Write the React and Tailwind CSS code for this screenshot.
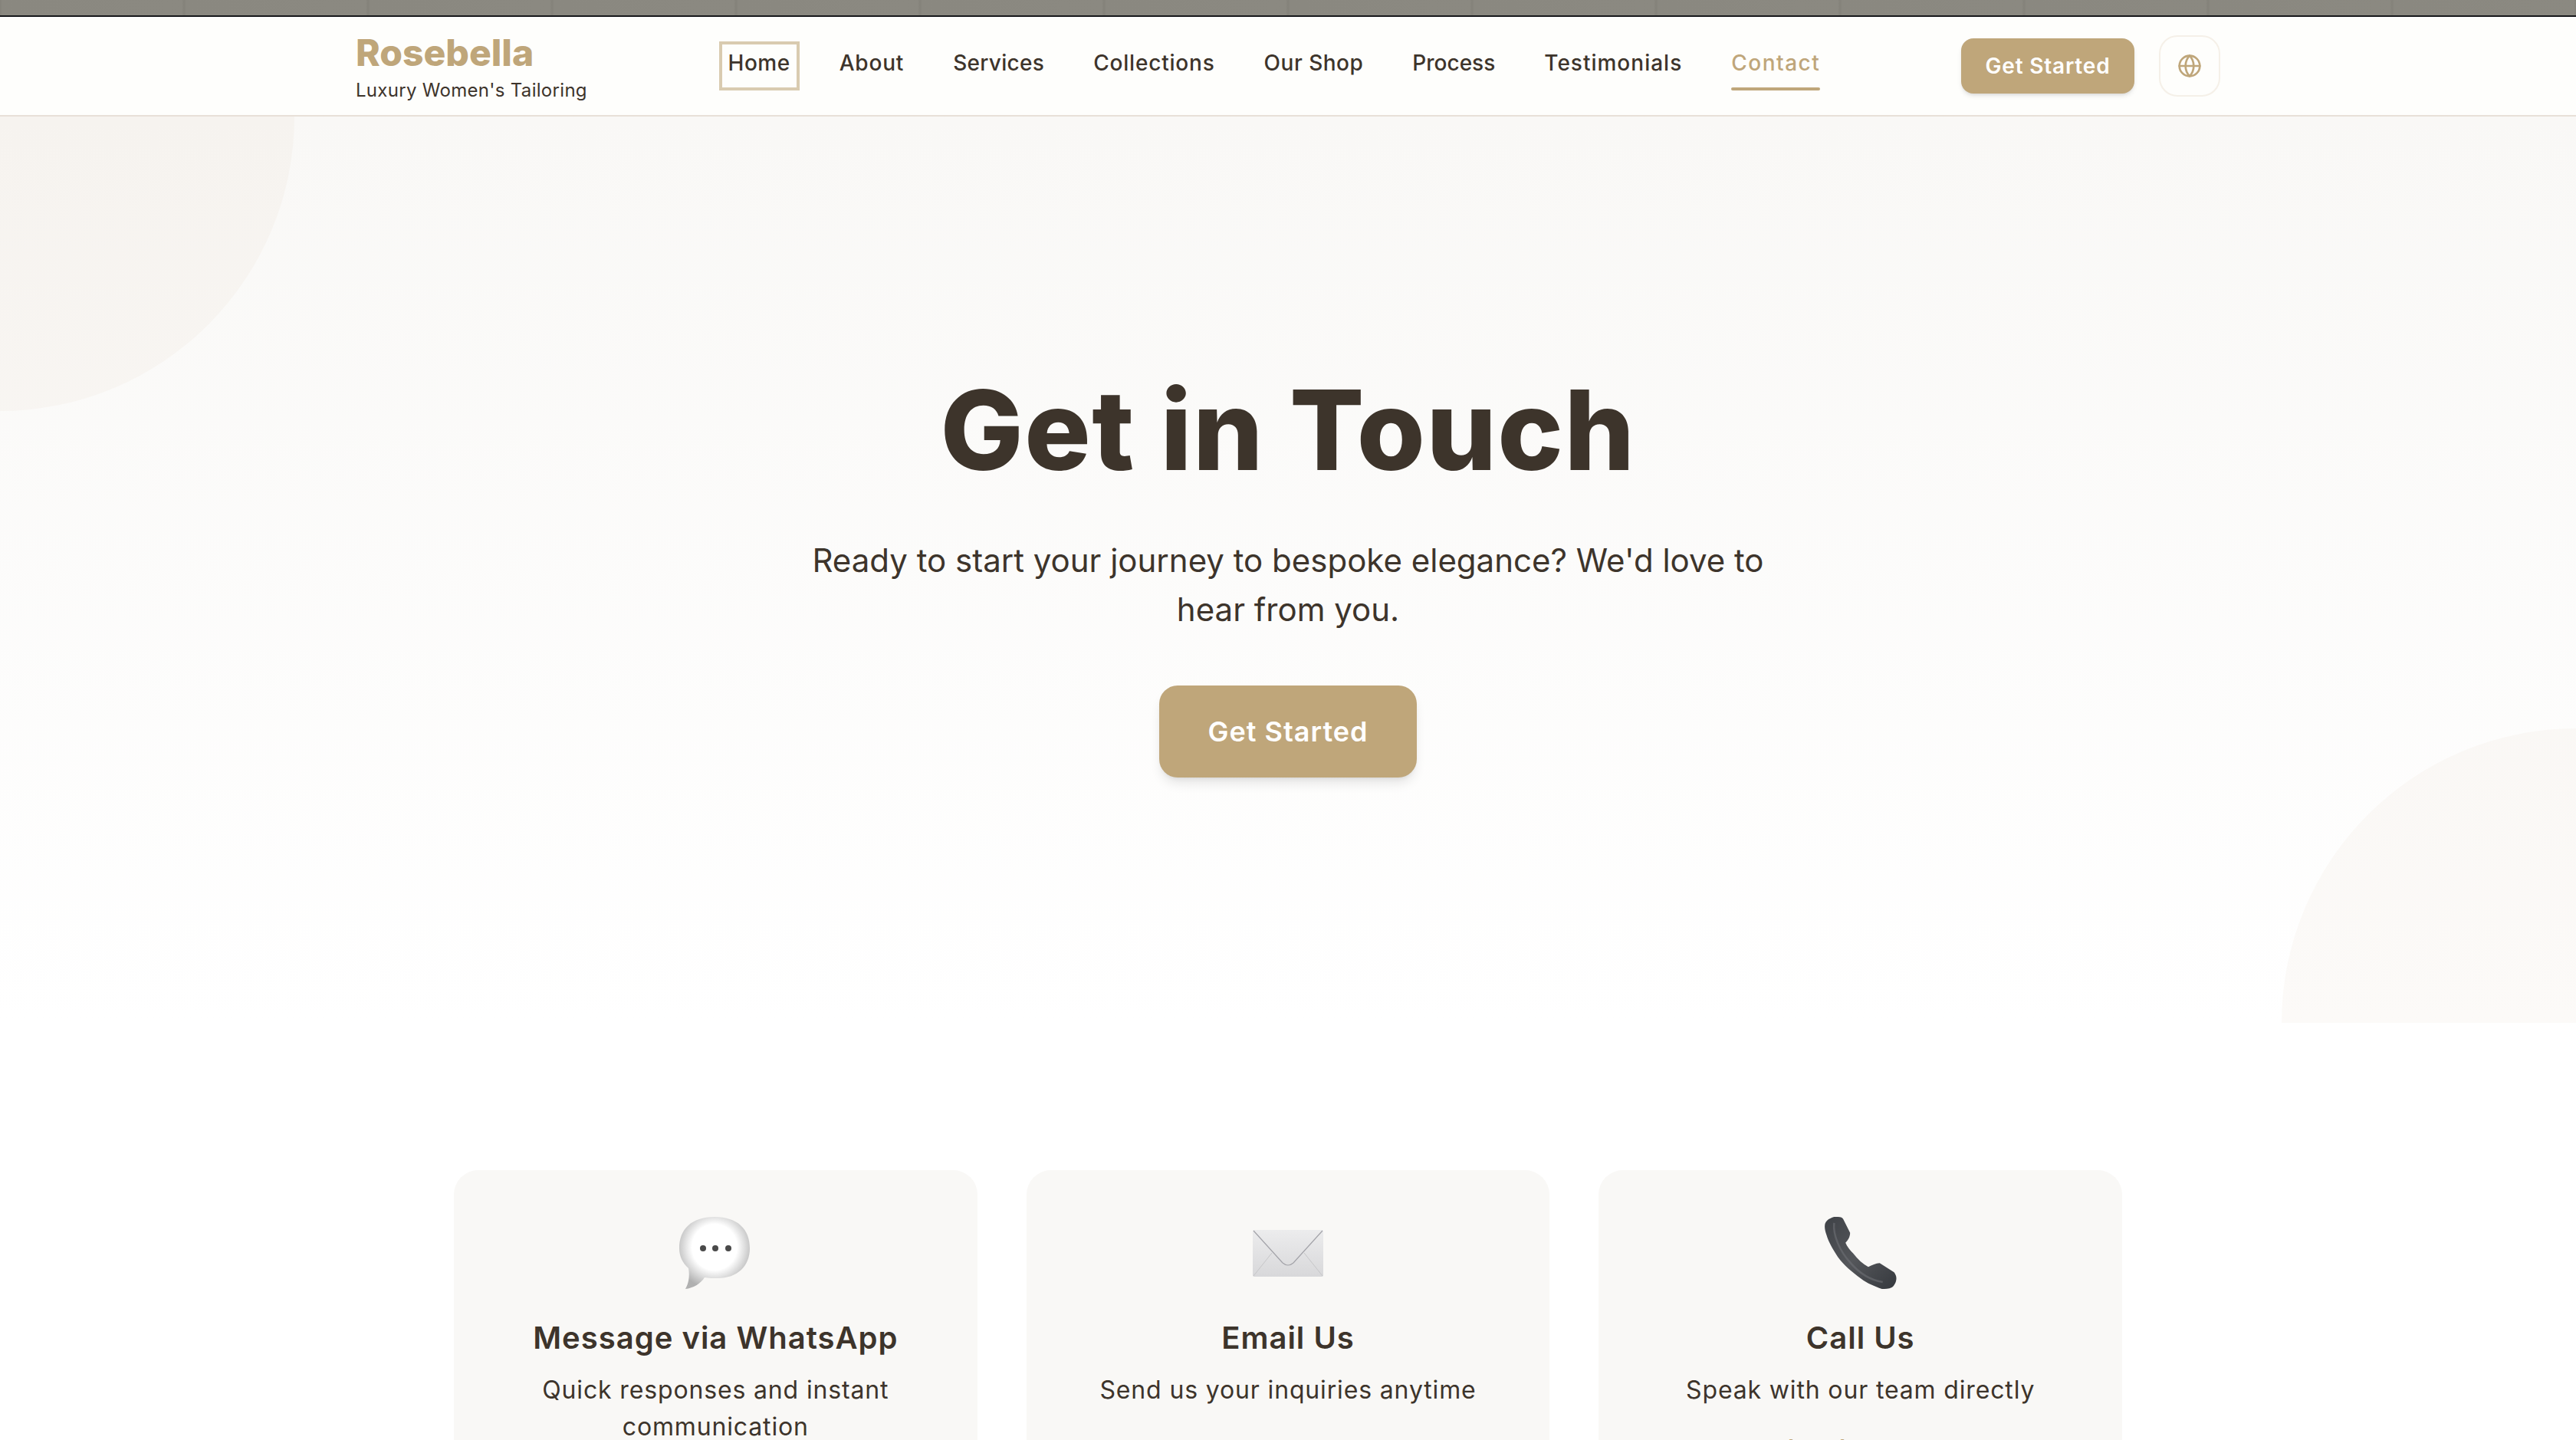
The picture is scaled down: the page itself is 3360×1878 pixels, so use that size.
import { Globe } from 'lucide-react';

const NAV = [
  { label: 'Home', focus: true, tracking: 'tracking-[0.5px]' },
  { label: 'About', tracking: 'tracking-[0.8px]' },
  { label: 'Services', tracking: 'tracking-[0.3px]' },
  { label: 'Collections', tracking: 'tracking-[0.8px]' },
  { label: 'Our Shop', tracking: 'tracking-[0.5px]' },
  { label: 'Process', tracking: 'tracking-[0px]' },
  { label: 'Testimonials', tracking: 'tracking-[1px]' },
  { label: 'Contact', active: true, tracking: 'tracking-[1.5px]' },
];

function ChatEmoji() {
  return (
    <svg viewBox="0 0 94 94" className="h-[94px] w-[94px]">
      <defs>
        <radialGradient id="bubble" cx="50%" cy="42%" r="58%">
          <stop offset="55%" stopColor="#ffffff" />
          <stop offset="100%" stopColor="#b0b0b0" />
        </radialGradient>
      </defs>
      <path d="M46 0C76 0 92 16 92 41C92 64 76 80 50 80C44 80 38 80 33 79C28 87 18 93 8 94C12 87 14 78 12 67C4 60 0 51 0 41C0 16 16 0 46 0Z" fill="url(#bubble)" />
      <circle cx="31" cy="41" r="4" fill="#4a4a4a" />
      <circle cx="47" cy="41" r="4" fill="#4a4a4a" />
      <circle cx="64" cy="41" r="4" fill="#4a4a4a" />
    </svg>
  );
}

function MailEmoji() {
  return (
    <svg viewBox="0 0 94 94" className="h-[94px] w-[94px]">
      <defs>
        <linearGradient id="env" x1="0" y1="0" x2="0" y2="1">
          <stop offset="0%" stopColor="#ececed" />
          <stop offset="100%" stopColor="#d8d8da" />
        </linearGradient>
      </defs>
      <rect x="1" y="17" width="92" height="61" rx="2" fill="url(#env)" />
      <path d="M2 18L40 60Q47 66 54 60L92 18" fill="none" stroke="#a3a3a9" strokeWidth="1.2" />
      <path d="M2 77L26 47M92 77L68 47" fill="none" stroke="#c6c6c8" strokeWidth="1" />
    </svg>
  );
}

function PhoneEmoji() {
  return (
    <svg viewBox="0 0 94 95" className="h-[94px] w-[94px]">
      <defs>
        <linearGradient id="handset" x1="0" y1="0" x2="1" y2="1">
          <stop offset="0%" stopColor="#3f4247" />
          <stop offset="50%" stopColor="#54565a" />
          <stop offset="100%" stopColor="#36393e" />
        </linearGradient>
      </defs>
      <path d="M7 2C11 0 14 -1 17 0C21 0 23 1 24 3L33 21C33 27 30 31 27 34C29 39 33 44 37 48C43 56 50 62 57 66C62 64 67 61 72 61L91 73C93 76 94 78 94 81C94 86 91 91 88 93C84 95 79 95 75 95C65 91 56 88 47 81C36 73 25 64 17 53C10 42 5 34 2 24C0 18 -1 14 0 9C1 6 4 3 7 2Z" fill="url(#handset)" />
      <path d="M12 8C10 24 20 46 33 60C44 73 58 83 76 86" fill="none" stroke="#6e7074" strokeWidth="2.5" opacity="0.6" />
    </svg>
  );
}

function ContactCard({ icon, title, text, value }) {
  return (
    <div className="flex h-[600px] flex-col items-center rounded-[32px] bg-[#f9f8f6] px-16 pt-[61px] text-center">
      <div className="h-[94px]">{icon}</div>
      <h3 className="mt-[36px] text-[40px] leading-[56px] font-semibold tracking-[1px]">{title}</h3>
      <p className="mt-[16px] text-[32px] leading-[48px] tracking-[0.85px]">{text}</p>
      {value && <p className="mt-[31px] text-[32px] leading-[48px] font-semibold text-[#bfa67a]">{value}</p>}
    </div>
  );
}

export default function App() {
  return (
    <div className="h-[1878px] overflow-hidden bg-white font-['Inter',sans-serif] text-[#3d342b]">
      <div className="h-[22px] border-b-2 border-[#16171a] bg-[repeating-linear-gradient(90deg,#84827a_0px,#8a8880_3px,#8b8981_237px,#84827a_240px)]" />

      <header className="h-[130px] border-b-2 border-[#e8e0d8] bg-[#fefefc]">
        <div className="mx-auto flex h-full w-[2432px] items-center justify-between">
          <div className="flex flex-col pt-[5px]">
            <span className="text-[48px] leading-[56px] font-extrabold text-[#bfa67a]">Rosebella</span>
            <span className="mt-[3px] text-[24px] leading-[36px] tracking-[0.3px]">Luxury Women's Tailoring</span>
          </div>
          <nav className="flex items-center gap-12">
            {NAV.map((item) => (
              <a
                key={item.label}
                className={`relative h-[56px] px-2 pt-[3px] text-[28px] leading-[42px] font-medium ${item.tracking} ${item.focus ? 'outline-4 outline-[#d9cbb0]' : ''} ${item.active ? 'text-[#bfa67a]' : ''}`}
              >
                {item.label}
                {item.active && <span className="absolute right-2 -bottom-1 left-2 h-1 rounded-sm bg-[#bfa67a]" />}
              </a>
            ))}
          </nav>
          <div className="flex items-center gap-8">
            <button className="h-[72px] w-[226px] rounded-2xl bg-[#bfa67a] text-[28px] font-semibold tracking-[0.8px] text-white shadow-md">Get Started</button>
            <button className="flex h-20 w-20 items-center justify-center rounded-3xl border-2 border-[#f5f0e8]">
              <Globe size={32} strokeWidth={2} color="#bfa67a" />
            </button>
          </div>
        </div>
      </header>

      <section className="relative h-[1182px] overflow-hidden bg-gradient-to-b from-[#f9f8f6] to-white">
        <div className="absolute -top-[384px] -left-[384px] h-[768px] w-[768px] rounded-full bg-[#bfa67a]/5" />
        <div className="absolute -right-[384px] -bottom-[384px] h-[768px] w-[768px] rounded-full bg-[#bfa67a]/5" />
        <div className="relative flex flex-col items-center pt-[320px] text-center">
          <h1 className="text-[144px] leading-[178px] font-extrabold tracking-[1.5px]">Get in Touch</h1>
          <p className="mt-[49px] w-[1280px] text-[42px] leading-[64px]">
            Ready to start your journey to bespoke elegance? We'd love to hear from you.
          </p>
          <button className="mt-[67px] h-[120px] w-[336px] rounded-3xl bg-[#bfa67a] text-[36px] font-semibold tracking-[1px] text-white shadow-lg">Get Started</button>
        </div>
      </section>

      <section className="pt-[192px]">
        <div className="mx-auto grid w-[2176px] grid-cols-3 gap-16">
          <ContactCard icon={<ChatEmoji />} title="Message via WhatsApp" text="Quick responses and instant communication" />
          <ContactCard icon={<MailEmoji />} title="Email Us" text="Send us your inquiries anytime" />
          <ContactCard icon={<PhoneEmoji />} title="Call Us" text="Speak with our team directly" value="+1 (555) 123-4567" />
        </div>
      </section>
    </div>
  );
}
